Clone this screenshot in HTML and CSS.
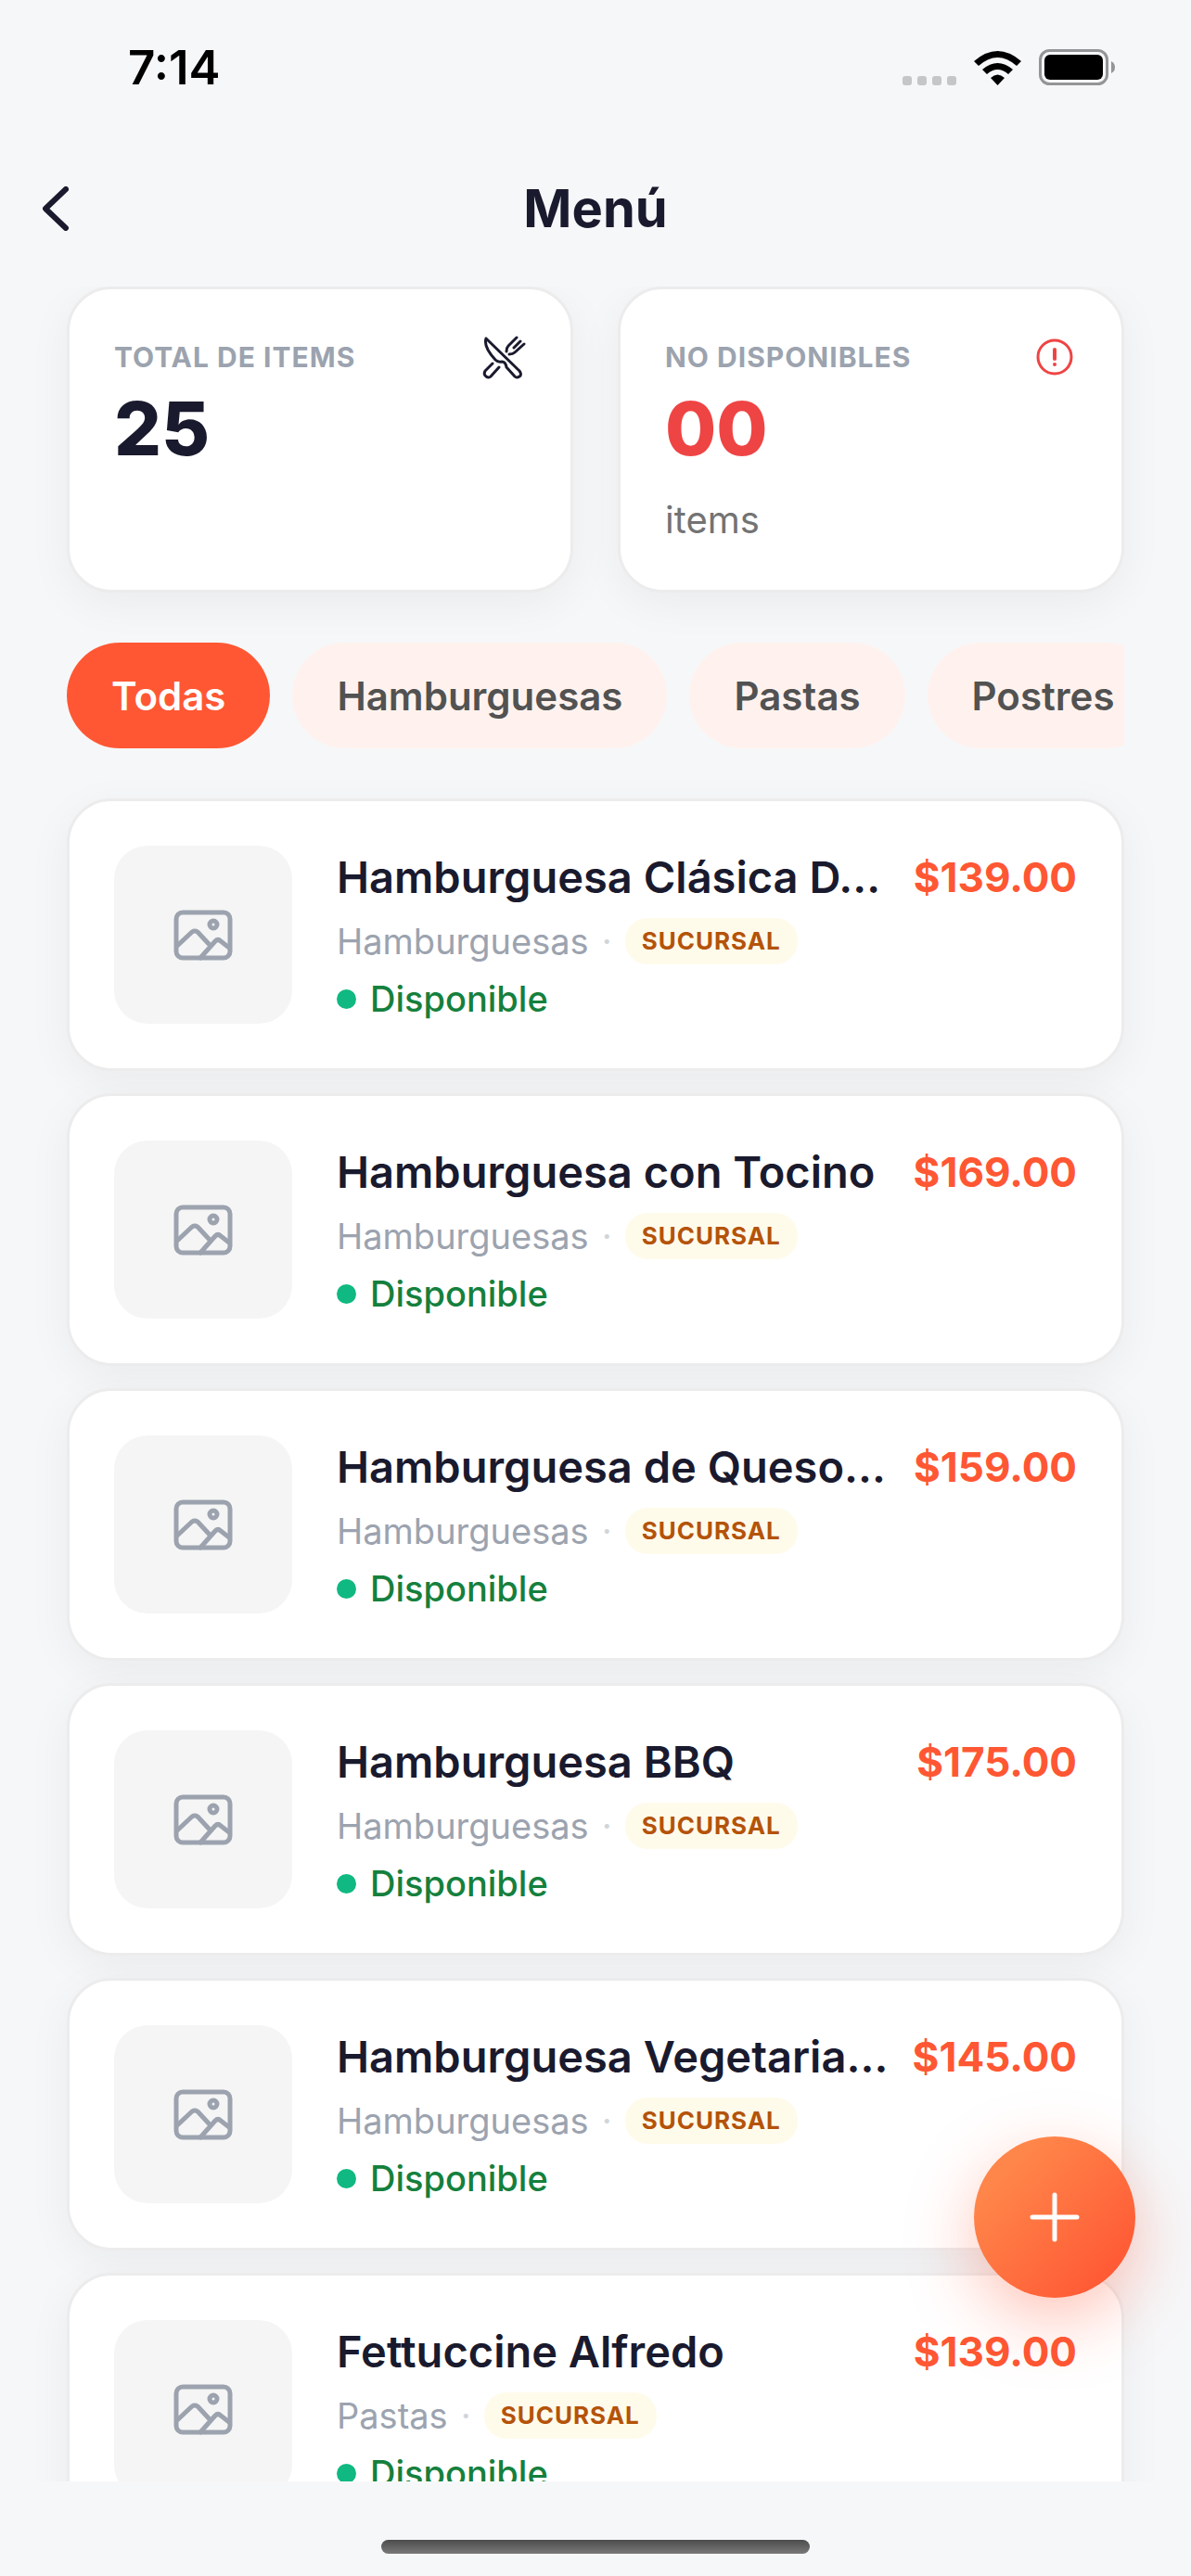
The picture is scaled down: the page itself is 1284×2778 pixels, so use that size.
FILE: index.html
```html
<!DOCTYPE html>
<html lang="es">

<head>
    <meta charset="utf-8">
    <meta name="viewport" content="width=device-width">
    <title>Menú</title>
    <link rel="stylesheet" href="styles.css">
</head>

<body>
    <svg class="sprite" aria-hidden="true">
        <symbol id="picture" viewBox="0 0 64 64" fill="none" stroke="currentColor" stroke-width="5" stroke-linejoin="round" stroke-linecap="round">
            <rect x="3" y="8" width="58" height="49" rx="7"></rect>
            <circle cx="43" cy="21" r="4"></circle>
            <path d="M4 44l16-15q3-2 6 0l13 14M29 57l16-18q3-3 6 0l9 7"></path>
        </symbol>
    </svg>

    <div class="app">
        <div class="statusbar">
            <span class="time">7:14</span>
            <div class="signals">
                <svg class="dots" width="58" height="10" viewBox="0 0 58 10" fill="#c5c6c8">
                    <rect width="10" height="10" rx="3"></rect>
                    <rect x="16" width="10" height="10" rx="3"></rect>
                    <rect x="32" width="10" height="10" rx="3"></rect>
                    <rect x="48" width="10" height="10" rx="3"></rect>
                </svg>
                <svg width="51" height="37" viewBox="0 0 51 37">
                    <path d="M0 11Q25.500-11 51 11l-5 5Q25.500-2 5 16zM9 20Q25.500 6 42 20l-5 5Q25.500 15 14 25zM18 29Q25.500 22 33 29L25.500 37z"></path>
                </svg>
                <svg width="82" height="39" viewBox="0 0 82 39">
                    <rect x="1.500" y="1.500" width="72" height="36" rx="10" fill="none" stroke="#949597" stroke-width="3"></rect>
                    <rect x="6" y="6" width="63" height="27" rx="6"></rect>
                    <path d="M78 13q4 2 4 6.500t-4 6.500z" fill="#949597"></path>
                </svg>
            </div>
        </div>

        <header class="header">
            <button class="back" type="button" aria-label="Volver">
                <svg width="28" height="48" viewBox="0 0 28 48" fill="none" stroke="currentColor" stroke-width="6" stroke-linecap="round" stroke-linejoin="round">
                    <path d="M25 3L3 24l22 21"></path>
                </svg>
            </button>
            <h1>Menú</h1>
        </header>

        <main class="content">
            <section class="stats">
                <div class="card stat">
                    <div class="stat-top">
                        <span>TOTAL DE ITEMS</span>
                        <svg width="48" height="48" viewBox="0 0 48 48" fill="none" stroke="currentColor" stroke-width="3" stroke-linecap="round" stroke-linejoin="round">
                            <path d="M5 4l36 35q3 4 0 6-3 2-5 0L27 35q-1-6-5-6-4 1-7-2Q2 13 5 4z"></path>
                            <path d="M12 31l-8 8q-2 4 1 6 3 2 5 0l9-10M27 18q0-4 2-6l9-9M42 7l-7 7M30 21q4 0 6-2l10-9"></path>
                        </svg>
                    </div>
                    <strong>25</strong>
                </div>
                <div class="card stat danger">
                    <div class="stat-top">
                        <span>NO DISPONIBLES</span>
                        <svg width="48" height="48" viewBox="0 0 48 48" fill="none" stroke="currentColor" stroke-width="3" stroke-linecap="round">
                            <circle cx="24" cy="24" r="18"></circle>
                            <path d="M24 16v10" stroke-width="4"></path>
                            <circle cx="24" cy="32" r="2" fill="currentColor" stroke="none"></circle>
                        </svg>
                    </div>
                    <strong>00</strong>
                    <small>items</small>
                </div>
            </section>

            <nav class="chips">
                <button type="button" class="active">Todas</button>
                <button type="button">Hamburguesas</button>
                <button type="button">Pastas</button>
                <button type="button">Postres</button>
            </nav>

            <ul class="list">
                <li class="card item">
                    <div class="thumb"><svg><use href="#picture"></use></svg></div>
                    <div class="info">
                        <div class="row"><h2>Hamburguesa Clásica D…</h2><b>$139.00</b></div>
                        <div class="meta">Hamburguesas <i>·</i> <span class="badge">SUCURSAL</span></div>
                        <div class="status">Disponible</div>
                    </div>
                </li>
                <li class="card item">
                    <div class="thumb"><svg><use href="#picture"></use></svg></div>
                    <div class="info">
                        <div class="row"><h2>Hamburguesa con Tocino</h2><b>$169.00</b></div>
                        <div class="meta">Hamburguesas <i>·</i> <span class="badge">SUCURSAL</span></div>
                        <div class="status">Disponible</div>
                    </div>
                </li>
                <li class="card item">
                    <div class="thumb"><svg><use href="#picture"></use></svg></div>
                    <div class="info">
                        <div class="row"><h2>Hamburguesa de Queso…</h2><b>$159.00</b></div>
                        <div class="meta">Hamburguesas <i>·</i> <span class="badge">SUCURSAL</span></div>
                        <div class="status">Disponible</div>
                    </div>
                </li>
                <li class="card item">
                    <div class="thumb"><svg><use href="#picture"></use></svg></div>
                    <div class="info">
                        <div class="row"><h2>Hamburguesa BBQ</h2><b>$175.00</b></div>
                        <div class="meta">Hamburguesas <i>·</i> <span class="badge">SUCURSAL</span></div>
                        <div class="status">Disponible</div>
                    </div>
                </li>
                <li class="card item">
                    <div class="thumb"><svg><use href="#picture"></use></svg></div>
                    <div class="info">
                        <div class="row"><h2>Hamburguesa Vegetaria…</h2><b>$145.00</b></div>
                        <div class="meta">Hamburguesas <i>·</i> <span class="badge">SUCURSAL</span></div>
                        <div class="status">Disponible</div>
                    </div>
                </li>
                <li class="card item">
                    <div class="thumb"><svg><use href="#picture"></use></svg></div>
                    <div class="info">
                        <div class="row"><h2>Fettuccine Alfredo</h2><b>$139.00</b></div>
                        <div class="meta">Pastas <i>·</i> <span class="badge">SUCURSAL</span></div>
                        <div class="status">Disponible</div>
                    </div>
                </li>
            </ul>
        </main>

        <button class="fab" type="button" aria-label="Agregar">
            <svg width="54" height="54" viewBox="0 0 54 54" stroke="#fff" stroke-width="5" stroke-linecap="round">
                <path d="M27 3v48M3 27h48"></path>
            </svg>
        </button>

        <footer class="bottom"><div class="home"></div></footer>
    </div>
</body>

</html>
```
FILE: styles.css
```css
* {
    margin: 0;
    padding: 0;
    box-sizing: border-box;
}

body {
    background: #f6f7f9;
    color: #1a1a2e;
    font-family: Inter, "Open Sans", sans-serif;
}

button {
    border: 0;
    background: none;
    color: inherit;
    font-family: inherit;
}

.sprite {
    position: absolute;
    width: 0;
    height: 0;
}

.app {
    position: relative;
    display: flex;
    flex-direction: column;
    height: 100vh;
    overflow: hidden;
}

/* status bar */
.statusbar {
    display: flex;
    justify-content: space-between;
    align-items: center;
    height: 144px;
    padding: 0 82px 0 138px;
    color: #000;
}

.time {
    font-size: 51px;
    font-weight: 600;
}

.signals {
    display: flex;
    align-items: flex-end;
    gap: 19px;
}

/* header */
.header {
    display: flex;
    align-items: center;
    height: 165px;
    padding: 0 46px 4px;
}

.back {
    display: flex;
    width: 28px;
}

.header h1 {
    flex: 1;
    margin-right: 28px;
    text-align: center;
    font-size: 56px;
    font-weight: 700;
}

/* scrolling content */
.content {
    flex: 1;
    min-height: 0;
    overflow: hidden;
    padding: 0 72px;
}

.card {
    background: #fff;
    border: 3px solid #ececed;
    border-radius: 48px;
    box-shadow: 0 12px 48px rgba(0, 0, 0, 0.05);
}

.stats {
    display: grid;
    grid-template-columns: 1fr 1fr;
    gap: 48px;
}

.stat {
    min-height: 328px;
    padding: 48px;
}

.stat-top {
    display: flex;
    justify-content: space-between;
    align-items: center;
    height: 50px;
    font-size: 30px;
    font-weight: 700;
    letter-spacing: 1px;
    color: #9ca3af;
}

.stat-top svg {
    color: #1a1a2e;
}

.stat strong {
    display: block;
    font-size: 80px;
    line-height: 104px;
    font-weight: 800;
}

.stat small {
    display: block;
    margin-top: 20px;
    font-size: 40px;
    line-height: 54px;
    color: #737373;
}

.danger strong,
.danger svg {
    color: #ef4444;
}

.chips {
    display: flex;
    gap: 24px;
    margin: 54px 0;
    overflow: hidden;
}

.chips button {
    flex: none;
    height: 114px;
    padding: 0 48px;
    border-radius: 57px;
    background: #fff2ee;
    color: #525252;
    font-size: 42px;
    font-weight: 600;
}

.chips .active {
    background: #ff5733;
    color: #fff;
}

/* product list */
.list {
    display: flex;
    flex-direction: column;
    gap: 24px;
    list-style: none;
}

.item {
    display: flex;
    align-items: center;
    gap: 48px;
    padding: 48px;
}

.thumb {
    display: flex;
    flex: none;
    justify-content: center;
    align-items: center;
    width: 192px;
    height: 192px;
    border-radius: 36px;
    background: #f5f5f5;
    color: #9ca3af;
}

.thumb svg {
    width: 64px;
    height: 64px;
}

.info {
    display: flex;
    flex: 1;
    flex-direction: column;
    gap: 12px;
    min-width: 0;
}

.row {
    display: flex;
    justify-content: space-between;
    gap: 12px;
    line-height: 64px;
}

.row h2 {
    overflow: hidden;
    font-size: 47px;
    font-weight: 600;
    white-space: nowrap;
    text-overflow: ellipsis;
}

.row b {
    color: #ff5733;
    font-size: 44px;
}

.meta {
    display: flex;
    align-items: center;
    gap: 14px;
    height: 50px;
    font-size: 38px;
    color: #9ca3af;
}

.meta i {
    color: #d1d5db;
    font-style: normal;
}

.badge {
    padding: 0 18px;
    border-radius: 24px;
    background: #fffbeb;
    color: #b45309;
    font-size: 26px;
    line-height: 50px;
    font-weight: 700;
    letter-spacing: 1px;
}

.status {
    display: flex;
    align-items: center;
    gap: 15px;
    font-size: 38px;
    line-height: 50px;
    font-weight: 500;
    color: #15803d;
}

.status::before {
    content: "";
    width: 21px;
    height: 21px;
    border-radius: 50%;
    background: #10b981;
}

/* floating button */
.fab {
    position: absolute;
    right: 60px;
    bottom: 300px;
    display: flex;
    justify-content: center;
    align-items: center;
    width: 174px;
    height: 174px;
    border-radius: 50%;
    background: linear-gradient(135deg, #ff864a 20%, #ff5a35 85%);
    box-shadow: 0 24px 72px rgba(255, 87, 51, 0.35);
}

.bottom {
    display: flex;
    justify-content: center;
    align-items: flex-end;
    height: 102px;
    padding-bottom: 24px;
}

.home {
    width: 36%;
    height: 15px;
    border-radius: 8px;
    background: linear-gradient(#4c4c4c, #797979);
}
```
